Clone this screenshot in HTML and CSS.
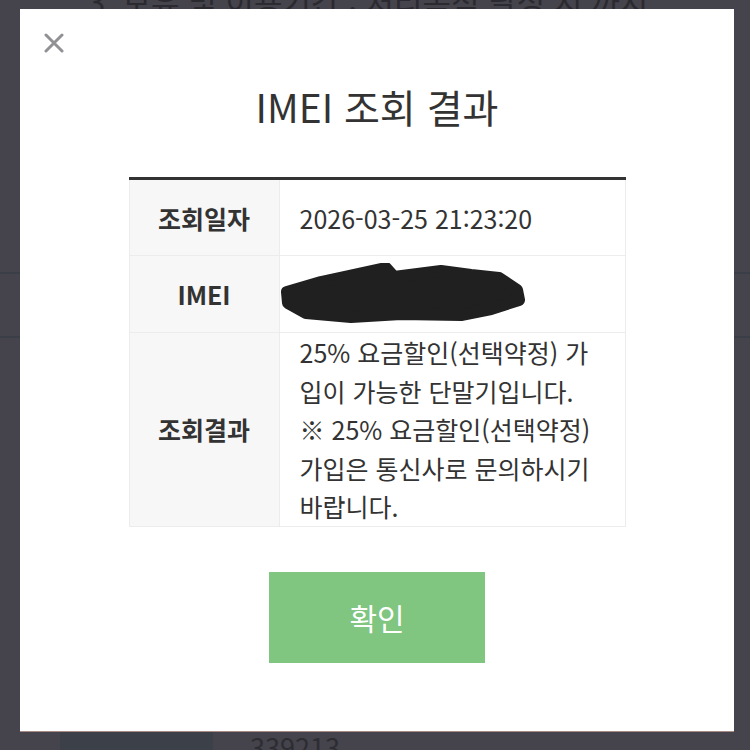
FILE: index.html
```html
<!DOCTYPE html>
<html lang="ko">
<head>
  <meta charset="utf-8">
  <meta name="viewport" content="width=device-width, initial-scale=1">
  <title>IMEI 조회 결과</title>
  <link rel="stylesheet" href="styles.css">
</head>
<body>
  <div class="backdrop">
    <p class="bg-heading">3. 보유 및 이용기간 : 처리목적 달성 시 까지</p>
    <div class="bg-row"></div>
    <div class="bg-bottom">
      <div class="bg-cell"></div>
      <div class="bg-num">339213</div>
    </div>
  </div>

  <div class="modal">
    <button class="close" aria-label="닫기">
      <svg width="20" height="20" viewBox="0 0 20 20">
        <path d="M2 2 L18 18 M18 2 L2 18" stroke="#909095" stroke-width="3" stroke-linecap="round"/>
      </svg>
    </button>
    <h1 class="title">IMEI 조회 결과</h1>
    <table class="result">
      <tr class="row-short">
        <th>조회일자</th>
        <td>2026-03-25 21:23:20</td>
      </tr>
      <tr class="row-short">
        <th>IMEI</th>
        <td>
          <!-- redacted by hand -->
          <svg class="scribble" width="250" height="62" viewBox="0 0 250 62">
            <path d="M6 29 L40 19 L105 5 L113 14 L160 8 L190 12 L218 15 L236 27 L238 37 L210 46 L180 52 L120 51 L70 54 L25 50 L7 40 Z"
                  fill="#202020" stroke="#202020" stroke-width="12" stroke-linejoin="round"/>
          </svg>
        </td>
      </tr>
      <tr>
        <th>조회결과</th>
        <td class="multi">25% 요금할인(선택약정) 가<br>입이 가능한 단말기입니다.<br>※ 25% 요금할인(선택약정)<br>가입은 통신사로 문의하시기<br>바랍니다.</td>
      </tr>
    </table>
    <button class="confirm">확인</button>
  </div>
</body>
</html>
```

FILE: styles.css
```css
body {
  margin: 0;
  width: 750px;
  height: 750px;
  overflow: hidden;
  position: relative;
  background: #45434b;
  font-family: "Noto Sans CJK KR", "Noto Sans", sans-serif;
  color: #333;
}
.backdrop {
  display: flex;
  flex-direction: column;
  height: 750px;
}
.bg-heading {
  margin: -22px 0 0 88px;
  font-size: 31px;
  color: #2b2a30;
  white-space: nowrap;
}
.bg-row {
  margin-top: 249px;
  height: 62px;
  border-top: 2px solid #3a3f47;
  border-bottom: 2px solid #3a3f47;
}
.bg-bottom {
  margin-top: auto;
  display: flex;
  height: 18px;
}
.bg-cell {
  width: 153px;
  margin-left: 60px;
  background: #3c4149;
}
.bg-num {
  margin-left: 37px;
  font-size: 27px;
  line-height: 30px;
  color: #2c2d33;
}

.modal {
  position: absolute;
  top: 9px;
  left: 20px;
  width: 714px;
  height: 723px;
  box-sizing: border-box;
  background: #fff;
  border-bottom: 1px solid #a88a84;
  display: flex;
  flex-direction: column;
  align-items: center;
}
.close {
  position: absolute;
  top: 24px;
  left: 24px;
  padding: 0;
  border: 0;
  background: none;
}
.close svg {
  display: block;
}
.title {
  margin: 72px 0 0;
  font-size: 39px;
  font-weight: 400;
  line-height: 50px;
  color: #333;
}
.result {
  margin-top: 46px;
  width: 497px;
  border-collapse: collapse;
  border-top: 3px solid #333;
  font-size: 25px;
}
.result th,
.result td {
  border: 1px solid #ececec;
  padding: 0 20px;
}
.result th {
  width: 149px;
  padding: 0;
  background: #f7f7f7;
  font-weight: 700;
  text-align: center;
}
.result td {
  text-align: left;
}
.row-short {
  height: 77px;
}
.scribble {
  display: block;
  margin-left: -19px;
}
.multi {
  line-height: 38.5px;
  white-space: nowrap;
}
.confirm {
  margin-top: 45px;
  width: 216px;
  height: 91px;
  border: 0;
  background: #80c580;
  color: #fff;
  font-family: inherit;
  font-size: 30px;
}
```
